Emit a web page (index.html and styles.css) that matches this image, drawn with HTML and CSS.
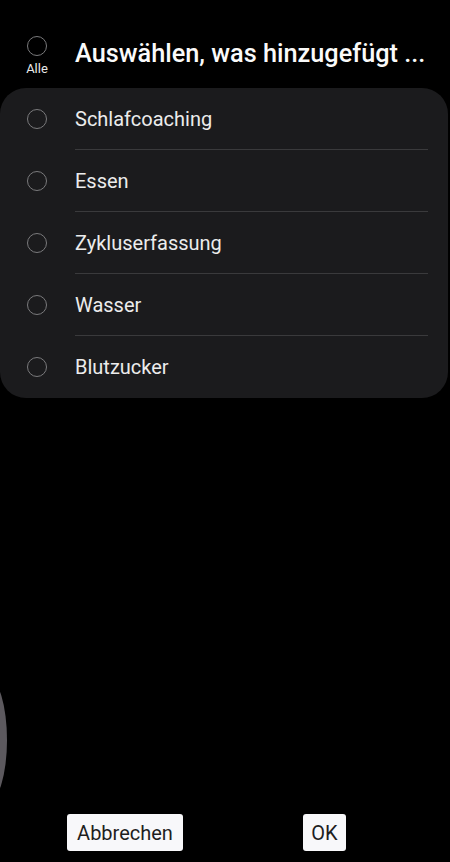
FILE: index.html
```html
<!DOCTYPE html>
<html lang="de">
<head>
<meta charset="utf-8">
<link rel="stylesheet" href="styles.css">
</head>
<body>
<div class="page">
  <div class="header">
    <div class="all">
      <span class="radio"></span>
      <span class="all-label">Alle</span>
    </div>
    <div class="title">Auswählen, was hinzugefügt ...</div>
  </div>
  <div class="card">
    <div class="row"><span class="radio-col"><span class="radio"></span></span><span class="label">Schlafcoaching</span></div>
    <div class="row"><span class="radio-col"><span class="radio"></span></span><span class="label">Essen</span></div>
    <div class="row"><span class="radio-col"><span class="radio"></span></span><span class="label">Zykluserfassung</span></div>
    <div class="row"><span class="radio-col"><span class="radio"></span></span><span class="label">Wasser</span></div>
    <div class="row"><span class="radio-col"><span class="radio"></span></span><span class="label">Blutzucker</span></div>
  </div>
  <div class="spacer"></div>
  <div class="buttons">
    <button class="btn btn-cancel">Abbrechen</button>
    <button class="btn btn-ok">OK</button>
  </div>
  <div class="edge-blob"></div>
</div>
</body>
</html>
```
FILE: styles.css
```css
html, body {
  margin: 0;
  padding: 0;
  background: #000;
}
body {
  font-family: Roboto, "Noto Sans", "Liberation Sans", sans-serif;
  color: #f2f2f2;
}
.page {
  position: relative;
  width: 450px;
  height: 862px;
  display: flex;
  flex-direction: column;
  overflow: hidden;
}
.header {
  display: flex;
  align-items: flex-start;
  padding-top: 36px;
  height: 52px;
}
.all {
  width: 74px;
  display: flex;
  flex-direction: column;
  align-items: center;
  flex: none;
}
.radio {
  display: block;
  width: 20px;
  height: 20px;
  box-sizing: border-box;
  border: 1.6px solid #7a7a7c;
  border-radius: 50%;
}
.all-label {
  font-size: 13px;
  line-height: 16px;
  margin-top: 5px;
  color: #e8e8e8;
}
.title {
  font-size: 25.3px;
  font-weight: 500;
  line-height: 30px;
  margin-top: 3px;
  margin-left: 1px;
  color: #fafafa;
  white-space: nowrap;
}
.card {
  width: 448px;
  background: #1b1b1d;
  border-radius: 26px;
  display: flex;
  flex-direction: column;
}
.row {
  height: 62px;
  display: flex;
  align-items: center;
}
.radio-col {
  width: 75px;
  display: flex;
  justify-content: center;
  padding-right: 1px;
  box-sizing: border-box;
  flex: none;
}
.label {
  flex: 1;
  height: 62px;
  line-height: 62px;
  font-size: 20px;
  color: #ececec;
  margin-right: 20px;
  box-sizing: border-box;
  border-bottom: 1px solid #3a3a3c;
}
.row:last-child .label {
  border-bottom: none;
}
.spacer {
  flex: 1;
}
.buttons {
  display: flex;
  align-items: center;
  height: 37px;
  margin-bottom: 11px;
}
.btn {
  font-family: Roboto, "Noto Sans", "Liberation Sans", sans-serif;
  font-size: 20px;
  color: #1e1e1e;
  background: #f8f8fa;
  border: none;
  border-radius: 3px;
  height: 37px;
  padding: 0 8px;
  margin: 0;
}
.btn-cancel {
  margin-left: 67px;
  width: 116px;
}
.btn-ok {
  margin-left: 120px;
  width: 43px;
  padding: 0;
}
.edge-blob {
  position: absolute;
  left: -32px;
  top: 677px;
  width: 39px;
  height: 126px;
  border-radius: 50%;
  background: #5c595e;
}
```
